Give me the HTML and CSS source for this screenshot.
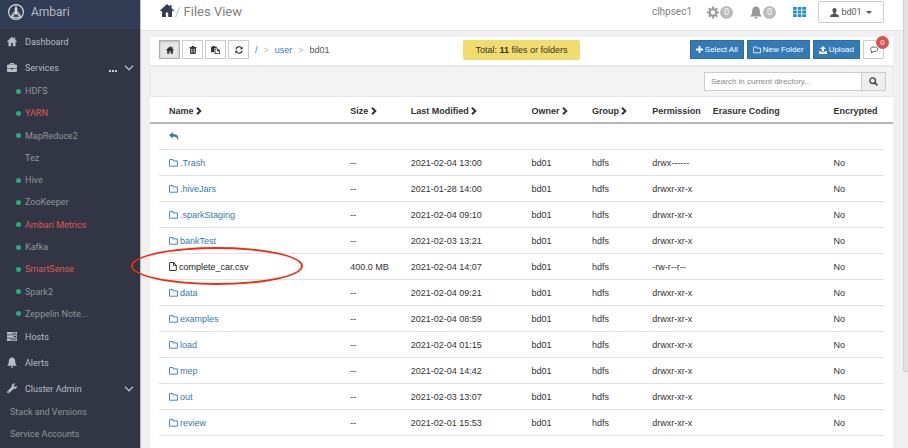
FILE: index.html
```html
<!DOCTYPE html>
<html lang="en">
<head>
<meta charset="utf-8">
<title>Ambari - Files View</title>
<link rel="stylesheet" href="styles.css">
</head>
<body>
<svg class="defs" aria-hidden="true">
  <symbol id="home" viewBox="0 0 14 13"><path d="M7 0 0 6.600l.8.9L2 6.500V13h3.800V8.500h2.400V13H12V6.500l1.200 1 .8-.9-2.500-2.400V1H9.800v1.600z"/></symbol>
  <symbol id="case" viewBox="0 0 12 11"><path d="M3.500 2V.8L4 0h4l.5.8V2H11l1 1v3H0V3l1-1zM4.700 1.200V2h2.600v-.8zM0 6.800h5v1.200h2V6.800h5V10l-.8 1H.8L0 10z"/></symbol>
  <symbol id="hosts" viewBox="0 0 12 11"><path fill-rule="evenodd" d="M0 0h12v3H0zM6 1v1h5V1zM0 4h12v3H0zM8 5v1h3V5zM0 8h12v3H0zM4 9v1h7V9z"/></symbol>
  <symbol id="bell" viewBox="0 0 12 13"><path d="M5.200.8a.8.8 0 0 1 1.600 0C9 1.300 9.800 3 9.800 5c0 3 .8 4.200 2.200 5.500H0C1.400 9.200 2.200 8 2.200 5 2.200 3 3 1.300 5.200.8zM4.400 11.200h3.200a1.600 1.600 0 0 1-3.200 0z"/></symbol>
  <symbol id="wrench" viewBox="0 0 12 12"><path d="M11.800 2.600 9.700 4 8.200 3.300 8.100 1.700 10.200.4C8.500-.4 6.300.2 5.700 2c-.2.700-.2 1.300 0 1.900L.5 9.200c-1.300 1.500.9 3.500 2.300 2.300l5.200-5.200c2 .8 4.400-.900 3.800-3.700zM1.700 9.800a.6.6 0 1 1 0 1.100.6.6 0 0 1 0-1.100z"/></symbol>
  <symbol id="down" viewBox="0 0 10 6"><path fill="none" stroke="currentColor" stroke-width="1.300" d="m1 .8 4 4 4-4"/></symbol>
  <symbol id="trash" viewBox="0 0 8 9"><path fill-rule="evenodd" d="M2.500 1 3 0h2l.5 1H8v1H7.300v6l-.8 1h-5l-.8-1V2H0V1zM2.200 3v4.500h.6V3zm1.500 0v4.500h.6V3zm1.500 0v4.500h.6V3z"/></symbol>
  <symbol id="paste" viewBox="0 0 10 9"><path d="M0 .8h1.800L2 0h2.500l.2.800h1.800v1.400H3.500V7H0z"/><path fill-rule="evenodd" d="M4 2.700h3.200L10 5.200V9H4zM5 3.600v4.500h4V5.800H6.700V3.600z"/></symbol>
  <symbol id="refresh" viewBox="0 0 10 10"><path fill="none" stroke="currentColor" stroke-width="1.500" d="M1.200 4.300A3.800 3.800 0 0 1 8 2.500M8.800 5.700A3.800 3.800 0 0 1 2 7.500"/><path d="M9.600.5v3.700H6zM.4 9.500V5.800H4z"/></symbol>
  <symbol id="folder" viewBox="0 0 9 8"><path fill="none" stroke="currentColor" stroke-width=".9" d="M.5 1v6.200h7.900V1.900H4.200V.6H.5z"/></symbol>
  <symbol id="file" viewBox="0 0 8 9"><path fill="none" stroke="currentColor" stroke-width=".9" d="M.6.5h3.900l2.800 2.700v5.300H.6zM4.500.5v2.800h2.800"/></symbol>
  <symbol id="reply" viewBox="0 0 10 9"><path d="M0 3.200 3.800 0v2c3.500 0 6.400 1.300 5.200 6.500C8.500 5.800 7 4.600 3.800 4.600v1.900z"/></symbol>
  <symbol id="right" viewBox="0 0 6 8"><path fill="none" stroke="currentColor" stroke-width="2" d="m1 .8 3.300 3.200L1 7.200"/></symbol>
  <symbol id="plus" viewBox="0 0 7 7"><path d="M2.600 0h1.800v2.600H7v1.800H4.400V7H2.600V4.400H0V2.600h2.600z"/></symbol>
  <symbol id="upload" viewBox="0 0 8 8"><path d="M4 0 7 3H5v2.500H3V3H1zM0 5.300h2.300v1h3.400v-1H8V8H0z"/></symbol>
  <symbol id="chat" viewBox="0 0 9 8"><path fill="none" stroke="currentColor" stroke-width=".9" d="M4.700.6C2.300.6.600 1.700.600 3.200c0 .9.600 1.600 1.500 2.100-.1.700-.4 1.200-.9 1.800 1.100-.2 1.900-.7 2.500-1.300h1C7 5.800 8.500 4.700 8.500 3.200S7 .6 4.700.6z"/></symbol>
  <symbol id="search" viewBox="0 0 9 9"><circle cx="3.700" cy="3.700" r="2.800" fill="none" stroke="currentColor" stroke-width="1.400"/><path stroke="currentColor" stroke-width="1.700" d="m5.800 5.800 2.600 2.600"/></symbol>
  <symbol id="gear" viewBox="0 0 12 12"><circle cx="6" cy="6" r="3.300" fill="none" stroke="currentColor" stroke-width="2"/><path stroke="currentColor" stroke-width="2" d="M6 0v2.200M6 9.800V12M0 6h2.200M9.800 6H12M1.800 1.800l1.500 1.500M8.700 8.700l1.500 1.500M10.200 1.800 8.700 3.300M3.300 8.700l-1.500 1.500"/></symbol>
  <symbol id="apps" viewBox="0 0 13 10"><path d="M0 0h3.700v2.800H0zM4.700 0h3.700v2.800H4.700zM9.300 0H13v2.800H9.300zM0 3.600h3.700v2.800H0zM4.700 3.600h3.700v2.800H4.700zM9.300 3.600H13v2.800H9.300zM0 7.200h3.700V10H0zM4.700 7.200h3.700V10H4.700zM9.300 7.200H13V10H9.300z"/></symbol>
  <symbol id="person" viewBox="0 0 9 9"><path d="M4.500 0c1.500 0 2.200 1 2.100 2.500 0 1-.4 1.800-1 2.300v1L8.500 7 9 9H0l.5-2 2.900-1.200v-1c-.6-.5-1-1.300-1-2.300C2.300 1 3 0 4.500 0z"/></symbol>
  <symbol id="logo" viewBox="0 0 18 18"><circle cx="9" cy="9" r="7.400" fill="none" stroke="currentColor" stroke-width="1.200"/><path d="M8.500 2.500h1l.4 2.700 1 .6-.8.700.7 3.500-.8 1.500H8L7.200 10l.7-3.500-.8-.7 1-.6z"/><path d="M7.300 8 3 13.800l2.200 2L7.600 12zM10.700 8l4.300 5.800-2.200 2-2.400-3.800z" opacity=".75"/><path fill="none" stroke="currentColor" d="M5 15.500c2.500-1.600 5.500-1.600 8 0"/></symbol>
</svg>
<div class="app">
  <aside class="sidebar">
    <div class="brand"><svg class="logo"><use href="#logo"/></svg>Ambari</div>
    <nav>
      <a class="item" href="#"><svg><use href="#home"/></svg>Dashboard</a>
      <a class="item" href="#"><svg><use href="#case"/></svg>Services<span class="more"><i></i><i></i><i></i></span><svg class="caret"><use href="#down"/></svg></a>
      <ul class="services">
        <li><a href="#">HDFS</a></li>
        <li class="alert"><a href="#">YARN</a></li>
        <li><a href="#">MapReduce2</a></li>
        <li class="client"><a href="#">Tez</a></li>
        <li><a href="#">Hive</a></li>
        <li><a href="#">ZooKeeper</a></li>
        <li class="alert"><a href="#">Ambari Metrics</a></li>
        <li><a href="#">Kafka</a></li>
        <li class="alert"><a href="#">SmartSense</a></li>
        <li><a href="#">Spark2</a></li>
        <li><a href="#">Zeppelin Note...</a></li>
      </ul>
      <a class="item" href="#"><svg><use href="#hosts"/></svg>Hosts</a>
      <a class="item" href="#"><svg><use href="#bell"/></svg>Alerts</a>
      <a class="item" href="#"><svg><use href="#wrench"/></svg>Cluster Admin<svg class="caret"><use href="#down"/></svg></a>
      <ul class="admin">
        <li><a href="#">Stack and Versions</a></li>
        <li><a href="#">Service Accounts</a></li>
      </ul>
    </nav>
  </aside>
  <div class="content">
    <header class="topbar">
      <a class="homelink" href="#" aria-label="Home"><svg><use href="#home"/></svg></a>
      <h1><span>/</span> Files View</h1>
      <span class="cluster">clhpsec1</span>
      <button class="status" aria-label="Operations"><svg><use href="#gear"/></svg><span>0</span></button>
      <button class="status" aria-label="Alerts"><svg><use href="#bell"/></svg><span>0</span></button>
      <button class="apps" aria-label="Views"><svg><use href="#apps"/></svg></button>
      <button class="user"><svg><use href="#person"/></svg>bd01<i></i></button>
    </header>
    <main class="panel">
      <div class="toolbar">
        <div class="tools">
          <button class="tool active" aria-label="Home directory"><svg><use href="#home"/></svg></button>
          <button class="tool" aria-label="Trash"><svg><use href="#trash"/></svg></button>
          <button class="tool" aria-label="Paste"><svg class="wide"><use href="#paste"/></svg></button>
          <button class="tool" aria-label="Refresh"><svg><use href="#refresh"/></svg></button>
          <div class="crumbs"><a href="#">/</a><i>&gt;</i><a href="#">user</a><i>&gt;</i><span>bd01</span></div>
        </div>
        <div class="total">Total: <b>11</b> files or folders</div>
        <div class="actions">
          <button class="primary"><svg class="small"><use href="#plus"/></svg>Select All</button>
          <button class="primary"><svg><use href="#folder"/></svg>New Folder</button>
          <button class="primary"><svg><use href="#upload"/></svg>Upload</button>
          <button class="tool chat" aria-label="Messages"><svg><use href="#chat"/></svg><span class="badge">0</span></button>
        </div>
      </div>
      <form class="searchbar">
        <input type="text" aria-label="Search" placeholder="Search in current directory...">
        <button type="button" aria-label="Search"><svg><use href="#search"/></svg></button>
      </form>
      <table>
        <colgroup><col class="c3"><col class="c1"><col class="c2"><col class="c1"><col class="c1"><col class="c1"><col class="c2"><col class="c1"></colgroup>
        <thead><tr><th>Name <svg><use href="#right"/></svg></th><th>Size <svg><use href="#right"/></svg></th><th>Last Modified <svg><use href="#right"/></svg></th><th>Owner <svg><use href="#right"/></svg></th><th>Group <svg><use href="#right"/></svg></th><th>Permission</th><th>Erasure Coding</th><th>Encrypted</th></tr></thead>
        <tbody>
          <tr><td colspan="8"><a href="#" aria-label="Parent directory"><svg class="back"><use href="#reply"/></svg></a></td></tr>
          <tr><td><a href="#"><svg><use href="#folder"/></svg>.Trash</a></td><td>--</td><td>2021-02-04 13:00</td><td>bd01</td><td>hdfs</td><td>drwx------</td><td></td><td>No</td></tr>
          <tr><td><a href="#"><svg><use href="#folder"/></svg>.hiveJars</a></td><td>--</td><td>2021-01-28 14:00</td><td>bd01</td><td>hdfs</td><td>drwxr-xr-x</td><td></td><td>No</td></tr>
          <tr><td><a href="#"><svg><use href="#folder"/></svg>.sparkStaging</a></td><td>--</td><td>2021-02-04 09:10</td><td>bd01</td><td>hdfs</td><td>drwxr-xr-x</td><td></td><td>No</td></tr>
          <tr><td><a href="#"><svg><use href="#folder"/></svg>bankTest</a></td><td>--</td><td>2021-02-03 13:21</td><td>bd01</td><td>hdfs</td><td>drwxr-xr-x</td><td></td><td>No</td></tr>
          <tr><td class="marked"><span class="file"><svg><use href="#file"/></svg>complete_car.csv</span></td><td>400.0 MB</td><td>2021-02-04 14:07</td><td>bd01</td><td>hdfs</td><td>-rw-r--r--</td><td></td><td>No</td></tr>
          <tr><td><a href="#"><svg><use href="#folder"/></svg>data</a></td><td>--</td><td>2021-02-04 09:21</td><td>bd01</td><td>hdfs</td><td>drwxr-xr-x</td><td></td><td>No</td></tr>
          <tr><td><a href="#"><svg><use href="#folder"/></svg>examples</a></td><td>--</td><td>2021-02-04 08:59</td><td>bd01</td><td>hdfs</td><td>drwxr-xr-x</td><td></td><td>No</td></tr>
          <tr><td><a href="#"><svg><use href="#folder"/></svg>load</a></td><td>--</td><td>2021-02-04 01:15</td><td>bd01</td><td>hdfs</td><td>drwxr-xr-x</td><td></td><td>No</td></tr>
          <tr><td><a href="#"><svg><use href="#folder"/></svg>mep</a></td><td>--</td><td>2021-02-04 14:42</td><td>bd01</td><td>hdfs</td><td>drwxr-xr-x</td><td></td><td>No</td></tr>
          <tr><td><a href="#"><svg><use href="#folder"/></svg>out</a></td><td>--</td><td>2021-02-03 13:07</td><td>bd01</td><td>hdfs</td><td>drwxr-xr-x</td><td></td><td>No</td></tr>
          <tr><td><a href="#"><svg><use href="#folder"/></svg>review</a></td><td>--</td><td>2021-02-01 15:53</td><td>bd01</td><td>hdfs</td><td>drwxr-xr-x</td><td></td><td>No</td></tr>
        </tbody>
      </table>
    </main>
  </div>
  <div class="scroll"><div class="thumb"></div></div>
</div>
</body>
</html>
```
FILE: styles.css
```css
*, *::before, *::after { box-sizing: border-box; }
body { margin: 0; overflow: hidden; font: 9px/12px "Liberation Sans", Arial, sans-serif; color: #333; background: #f0f0f0; }
.defs { position: absolute; width: 0; height: 0; }
svg { fill: currentColor; flex: none; }
a { color: #337ab7; text-decoration: none; }
ul { list-style: none; margin: 0; padding: 0; }
button, input { font: inherit; margin: 0; }
button { display: flex; align-items: center; justify-content: center; padding: 0; border: 0; background: none; color: inherit; }

.app { display: flex; min-height: 100vh; }

/* Sidebar */
.sidebar { flex: 0 0 141px; background: #323544; border-right: 1px solid #b9bac2; font-family: Roboto, sans-serif; }
.brand { display: flex; align-items: center; gap: 6px; height: 29px; padding: 0 0 5px 7px; background: #313d54; color: #b5bac3; font-size: 12px; }
.logo { width: 18px; height: 18px; color: #d5d9df; }
.item { display: flex; align-items: center; height: 26px; padding: 0 7px; color: #b8bec4; }
.item svg { width: 10px; height: 11px; margin: 0 8px 2px 0; }
.item .caret { width: 10px; height: 6px; margin: 0 -1px 0 auto; }
.more { display: flex; gap: 1px; margin: 5px 0 0 auto; }
.more i { width: 2px; height: 2px; border-radius: 1px; background: #fff; }
.more + .caret { margin-left: 7px; }
.services { display: grid; grid-auto-rows: 1fr; height: 245px; margin: -1px 0; }
.services li { display: flex; align-items: center; gap: 4px; padding-left: 16px; }
.services li::before { content: ""; width: 5px; height: 5px; border-radius: 50%; background: #1eb475; }
.services .client::before { background: none; }
.services a, .admin a { color: #939597; }
.services .alert a { color: #e0555a; }
.admin { margin-top: -1px; }
.admin li { display: flex; align-items: center; height: 22px; padding-left: 10px; }

/* Top bar */
.content { flex: 1; min-width: 0; display: flex; flex-direction: column; }
.topbar { display: flex; align-items: center; height: 31px; padding: 0 19px 6px; background: #fff; border-bottom: 1px solid #e3e3e3; font-family: Roboto, sans-serif; color: #808080; }
.homelink { display: flex; color: #313d54; }
.homelink svg { width: 14px; height: 13px; margin-bottom: 3px; }
h1 { margin: 0 auto 0 1px; font-size: 13px; line-height: 16px; font-weight: 400; }
h1 span { color: #bbb; }
.cluster { font-size: 10px; margin-right: 15px; }
.status { gap: 1px; margin-right: 17px; color: #999; }
.status svg { width: 12px; height: 13px; }
.status span { width: 13px; height: 13px; border-radius: 50%; background: #bbb; color: #fff; line-height: 13px; }
.apps { margin-right: 12px; color: #1d8fc4; }
.apps svg { width: 13px; height: 10px; }
.user { gap: 2px; width: 66px; height: 22px; border: 1px solid #ccc; border-radius: 2px; color: #555; }
.user svg { width: 9px; height: 9px; }
.user i { margin-left: 2px; border: 3px solid transparent; border-top-color: #555; border-bottom: 0; }

/* Panel */
.panel { flex: 1; margin: 6px 10px 0 9px; background: #fff; }
.toolbar { display: grid; grid-template-columns: 1fr auto 1fr; align-items: start; height: 28px; padding: 3px 9px 0; }
.tools { display: flex; gap: 2px; }
.tool { width: 21px; height: 19px; border: 1px solid #ccc; background: #fff; color: #333; }
.tool svg { width: 8px; height: 8px; }
.tool .wide { width: 9px; }
.tool.active { background: #e6e6e6; border-color: #adadad; box-shadow: inset 0 1px 2px #bbb; }
.crumbs { display: flex; gap: 6px; margin-left: 4px; line-height: 20px; color: #555; }
.crumbs i { color: #bbb; font-style: normal; }
.total { padding: 0 12px; line-height: 20px; border-radius: 2px; background: #f0db6e; color: #333; }
.actions { display: flex; justify-content: flex-end; gap: 3px; font-size: 8px; }
.primary { gap: 2px; height: 19px; padding: 0 5px; border: 1px solid #2e6da4; background: #337ab7; color: #fff; white-space: nowrap; }
.primary svg { width: 8px; height: 8px; }
.primary .small { width: 7px; height: 7px; }
.chat { position: relative; }
.badge { position: absolute; top: -5px; right: -6px; width: 13px; height: 13px; border-radius: 50%; background: #d9534f; color: #fff; line-height: 13px; }
.searchbar { display: flex; justify-content: flex-end; height: 32px; padding: 5px 6px; border: 1px solid #e8e8e8; border-top-width: 2px; background: #f4f4f4; }
.searchbar input { width: 158px; height: 19px; padding: 0 6px; border: 1px solid #ccc; background: #fff; font-size: 8px; color: #555; }
.searchbar input::placeholder { color: #888; }
.searchbar button { width: 25px; height: 19px; margin-left: -1px; border: 1px solid #ccc; background: #eee; color: #444; }
.searchbar button svg { width: 9px; height: 9px; }

/* File list */
table { width: 100%; padding: 0 9px; border-spacing: 0; table-layout: fixed; background: linear-gradient(#b5b5b5, #b5b5b5) 0 25px / 100% 2px no-repeat; }
.c1 { width: 8.33%; }
.c2 { width: 16.67%; }
.c3 { width: 25%; }
th, td { height: 26px; padding: 0 0 0 10px; text-align: left; white-space: nowrap; }
th { height: 27px; }
tbody td { border-bottom: 1px solid #e2e2e2; }
th svg { width: 6px; height: 8px; vertical-align: -1px; }
td a, .file { display: flex; align-items: center; gap: 2px; }
td svg { width: 9px; height: 8px; }
td .back { width: 10px; height: 9px; }
.file svg { width: 8px; height: 9px; }
.file { color: #222; }
.marked { position: relative; }
.marked::after { content: ""; position: absolute; left: -28px; top: -7px; width: 172px; height: 38px; border: 2px solid #f02c0c; border-radius: 50%; }

.scroll { flex: 0 0 5px; background: #efefef; }
.thumb { height: 372px; border: 1px solid #d0d0d0; border-width: 0 0 1px 1px; border-radius: 0 0 0 2px; background: #e2e2e2; }
```
